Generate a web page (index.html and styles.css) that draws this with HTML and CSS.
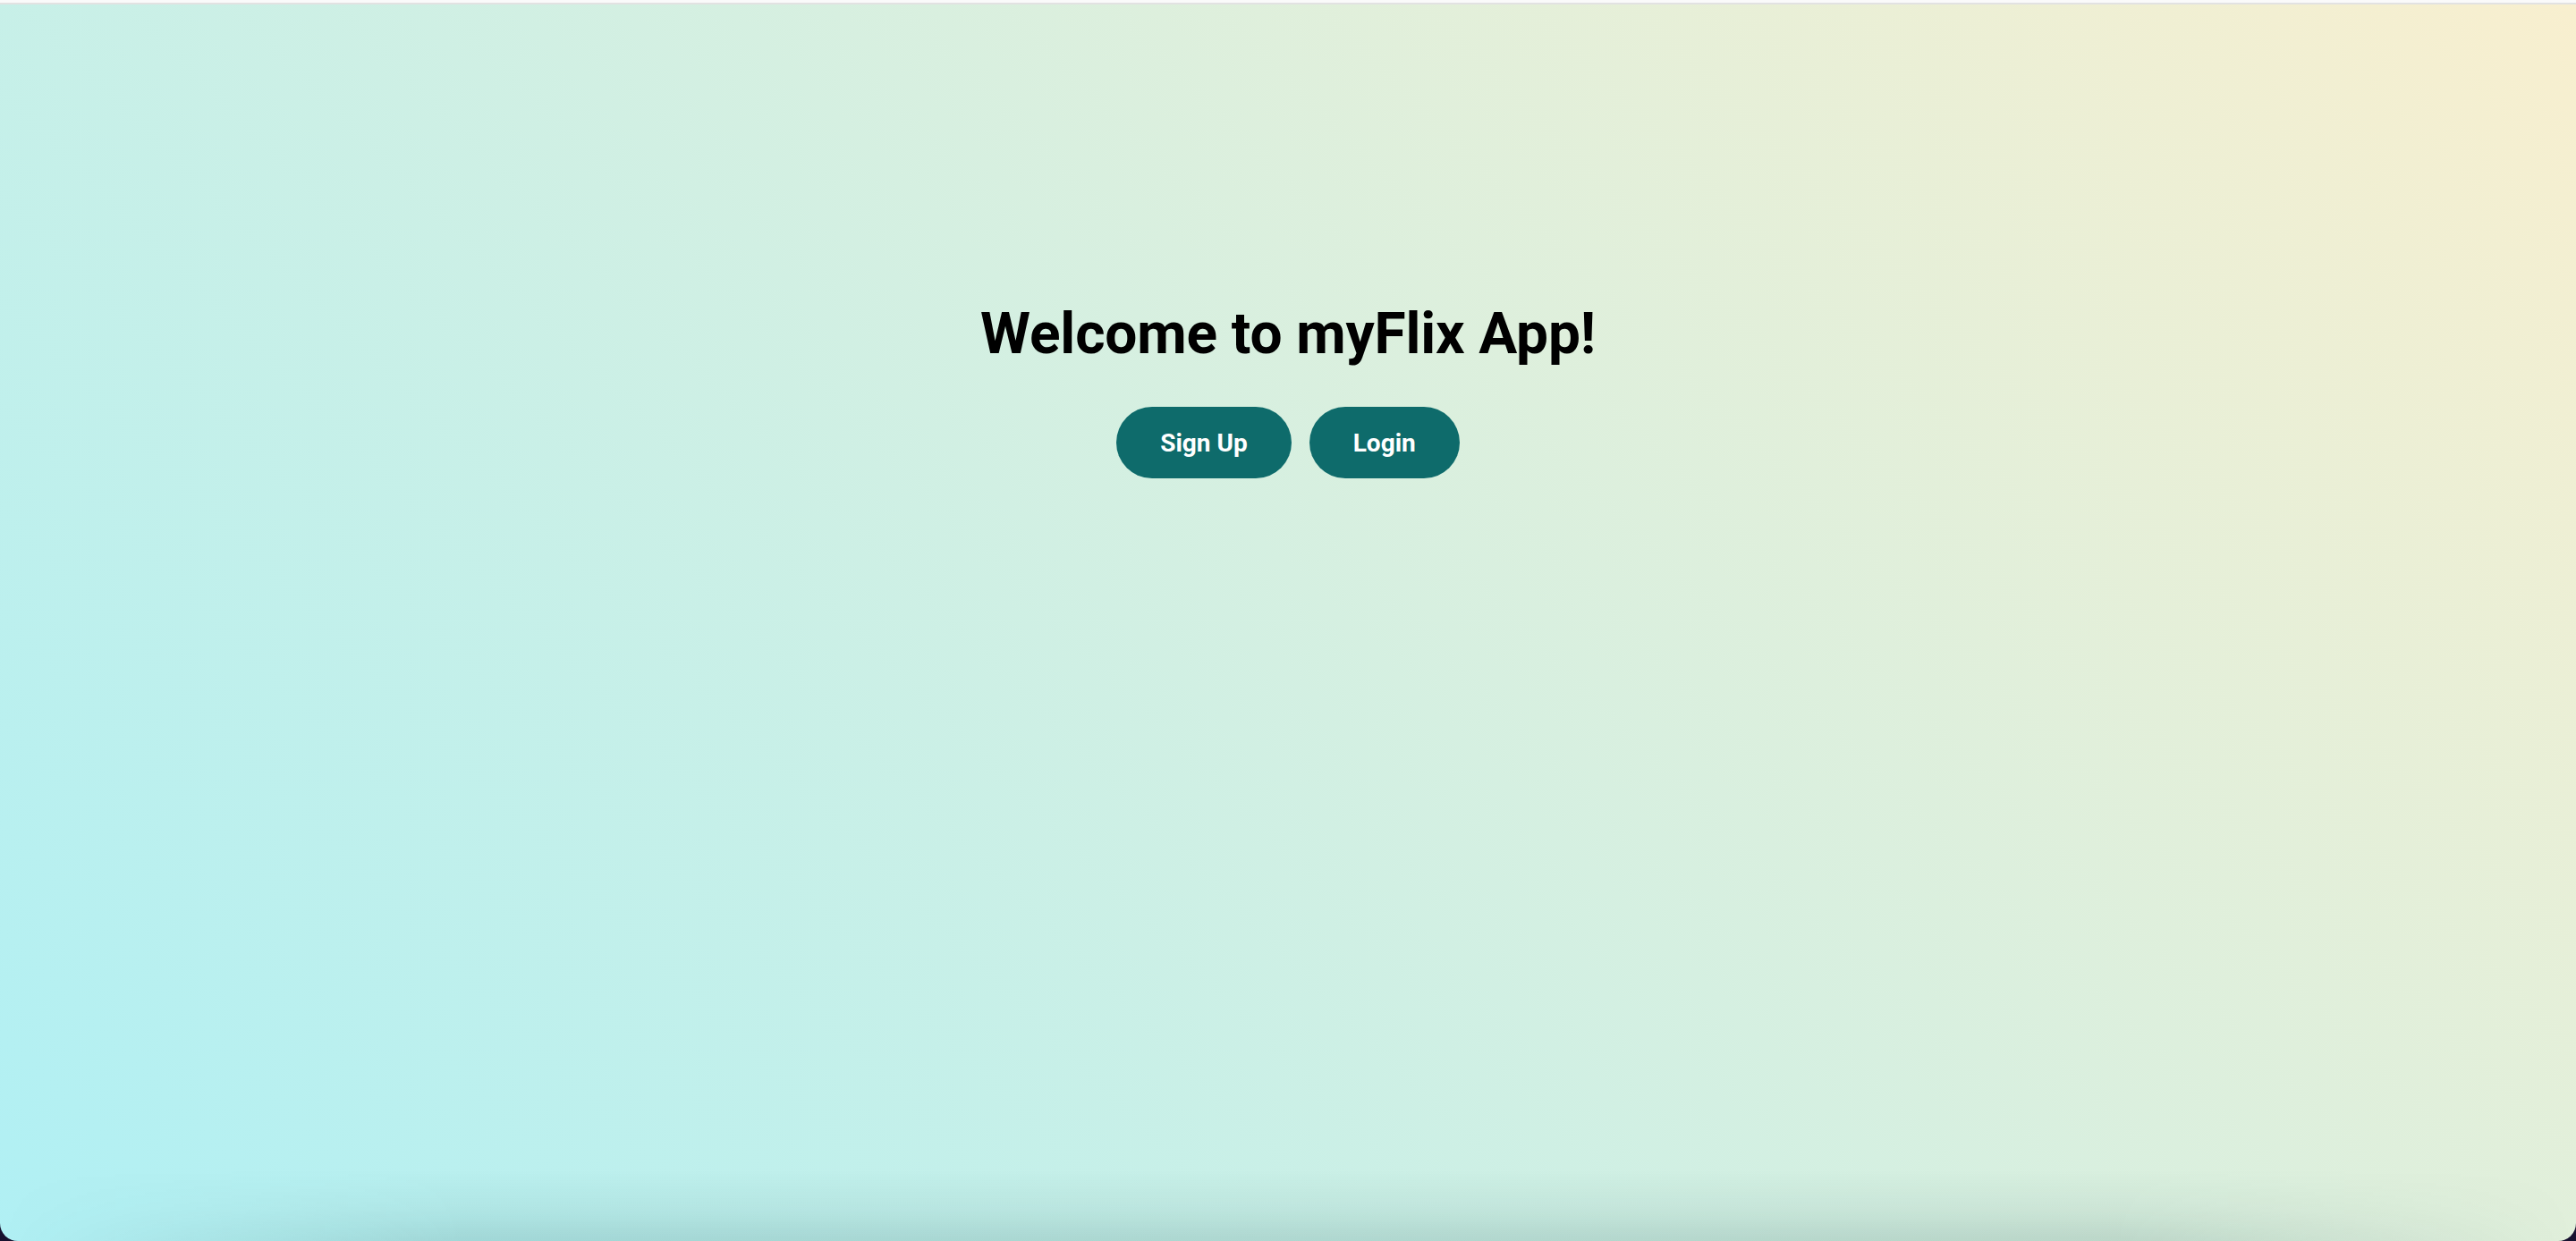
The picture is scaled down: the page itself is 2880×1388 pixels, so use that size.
FILE: index.html
```html
<!DOCTYPE html>
<html lang="en">
<head>
<meta charset="utf-8">
<title>myFlix</title>
<link rel="stylesheet" href="styles.css">
</head>
<body>
<div class="topbar"></div>
<main class="main">
  <h1 class="title">Welcome to myFlix App!</h1>
  <div class="actions">
    <button class="btn">Sign Up</button>
    <button class="btn">Login</button>
  </div>
</main>
</body>
</html>
```

FILE: styles.css
```css
html, body {
  margin: 0;
  padding: 0;
  height: 100%;
}
body {
  background: #17112f;
  font-family: Roboto, "Liberation Sans", sans-serif;
  display: flex;
  flex-direction: column;
}
.topbar {
  height: 5px;
  background: linear-gradient(#fafafa 0 3px, #e2e2e2 3px);
  flex: none;
}
.main {
  position: relative;
  flex: 1;
  overflow: hidden;
  border-radius: 0 0 20px 20px;
  background: linear-gradient(45deg, #b0f0f4 0%, #f8efcf 100%);
  display: flex;
  flex-direction: column;
  align-items: center;
  padding-top: 331px;
  box-sizing: border-box;
}
.main::after {
  content: "";
  position: absolute;
  left: 0;
  right: 0;
  bottom: 0;
  height: 80px;
  background: linear-gradient(to top, rgba(0, 50, 50, 0.13), rgba(0, 50, 50, 0.05) 45%, rgba(0, 50, 50, 0));
  -webkit-mask-image: linear-gradient(to right, transparent 0, #000 18%, #000 82%, transparent 100%);
  mask-image: linear-gradient(to right, transparent 0, #000 18%, #000 82%, transparent 100%);
  pointer-events: none;
}
.title {
  margin: 0;
  font-size: 64px;
  font-weight: 700;
  color: #000;
  line-height: normal;
  letter-spacing: -0.15px;
}
.actions {
  display: flex;
  gap: 20px;
  margin-top: 44px;
}
.btn {
  height: 80px;
  padding: 0 49px;
  border: none;
  border-radius: 40px;
  background: #0e6b6b;
  color: #fff;
  font-family: Roboto, "Liberation Sans", sans-serif;
  font-size: 28px;
  font-weight: 700;
  cursor: pointer;
}
```
